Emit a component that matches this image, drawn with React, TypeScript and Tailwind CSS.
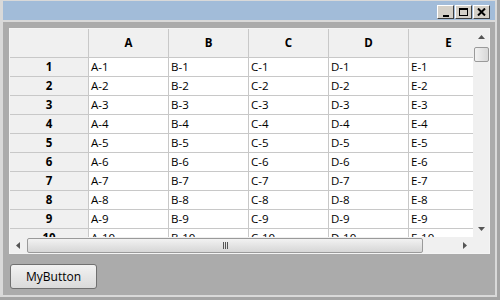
import React from 'react';

const columnas = ['A', 'B', 'C', 'D', 'E'];
const filas = Array.from({ length: 10 }, (_, i) => i + 1);

const fuente = { fontFamily: '"Open Sans", "Noto Sans", sans-serif' };

const BotonTitulo = ({ children }: { children: React.ReactNode }) => (
  <div className="w-[17px] h-[14px] bg-[#d4d0c8] border border-t-white border-l-white border-r-[#404040] border-b-[#404040] flex items-center justify-center">
    {children}
  </div>
);

const App: React.FC = () => {
  return (
    <div
      className="w-[500px] h-[300px] bg-[#d9d9d9] border-r-[3px] border-b-[3px] border-[#a4a4a4] pl-[3px] pr-[2px] pt-[1px] pb-[2px] flex flex-col gap-[2px] overflow-hidden"
      style={fuente}
    >
      {/* barra de titulo */}
      <div className="h-[19px] shrink-0 bg-[#a2bcd9] flex items-end justify-end pr-[5px] pb-[1px] gap-[1px]">
        <BotonTitulo>
          <div className="w-[6px] h-[2px] bg-black mt-[7px]" />
        </BotonTitulo>
        <BotonTitulo>
          <div className="w-[9px] h-[8px] border border-black border-t-2" />
        </BotonTitulo>
        <BotonTitulo>
          <svg width="9" height="8" viewBox="0 0 9 8">
            <path d="M1 0.5 L8 7.5 M8 0.5 L1 7.5" stroke="#000" strokeWidth="2" />
          </svg>
        </BotonTitulo>
      </div>

      {/* cuerpo */}
      <div className="flex-1 bg-[#ababab] pl-[6px] pt-[6px] flex flex-col">
        <div className="w-[481px] h-[226px] border border-[#f4f4f4] bg-white flex flex-col">
          <div className="flex h-[208px]">
            <div className="w-[463px] h-[208px] overflow-hidden text-[11.5px] text-black">
              {/* encabezado */}
              <div className="flex h-[29px]">
                <div className="w-[79px] shrink-0 bg-[#f0f0f0] border-r border-b border-[#c8c8c8]" />
                {columnas.map((c) => (
                  <div
                    key={c}
                    className="w-[80px] shrink-0 bg-[#f0f0f0] border-r border-b border-[#c8c8c8] flex items-center justify-center font-bold"
                  >
                    {c}
                  </div>
                ))}
              </div>
              {filas.map((f) => (
                <div key={f} className="flex h-[19px]">
                  <div className="w-[79px] shrink-0 bg-[#f0f0f0] border-r border-b border-[#c8c8c8] flex items-center justify-center font-bold">
                    {f}
                  </div>
                  {columnas.map((c) => (
                    <div
                      key={c}
                      className="w-[80px] shrink-0 border-r border-b border-[#c8c8c8] flex items-center pl-[2px] leading-none"
                    >
                      {c}-{f}
                    </div>
                  ))}
                </div>
              ))}
            </div>
            {/* scroll vertical */}
            <div className="w-[16px] h-[208px] bg-[#f0f0f0] flex flex-col items-center">
              <div className="h-[16px] w-full flex items-center justify-center">
                <svg width="7" height="4" viewBox="0 0 7 4">
                  <path d="M3.5 0 L7 4 L0 4 Z" fill="#555" />
                </svg>
              </div>
              <div className="mt-[2px] w-[15px] h-[15px] rounded-[2px] border border-[#9a9a9a] bg-gradient-to-r from-[#f2f2f2] to-[#d8d8d8]" />
              <div className="flex-1" />
              <div className="h-[16px] w-full flex items-center justify-center">
                <svg width="7" height="4" viewBox="0 0 7 4">
                  <path d="M0 0 L7 0 L3.5 4 Z" fill="#555" />
                </svg>
              </div>
            </div>
          </div>
          {/* scroll horizontal */}
          <div className="flex h-[16px]">
            <div className="w-[463px] h-[16px] bg-[#f0f0f0] flex items-center">
              <div className="w-[16px] h-full flex items-center justify-center">
                <svg width="4" height="7" viewBox="0 0 4 7">
                  <path d="M0 3.5 L4 0 L4 7 Z" fill="#555" />
                </svg>
              </div>
              <div className="ml-[1px] w-[396px] h-[15px] rounded-[2px] border border-[#9a9a9a] bg-gradient-to-b from-[#f2f2f2] to-[#d6d6d6] flex items-center justify-center gap-[1px]">
                <div className="w-[1px] h-[7px] bg-[#555]" />
                <div className="w-[1px] h-[7px] bg-[#555]" />
                <div className="w-[1px] h-[7px] bg-[#555]" />
              </div>
              <div className="flex-1" />
              <div className="w-[16px] h-full flex items-center justify-center">
                <svg width="4" height="7" viewBox="0 0 4 7">
                  <path d="M0 0 L4 3.5 L0 7 Z" fill="#555" />
                </svg>
              </div>
            </div>
            <div className="w-[16px] h-[16px] bg-[#f0f0f0]" />
          </div>
        </div>

        <button className="mt-[10px] ml-[1px] w-[87px] h-[25px] rounded-[3px] border border-[#707070] bg-gradient-to-b from-[#f2f2f2] to-[#dadada] text-[12px] text-black flex items-center justify-center">
          MyButton
        </button>
      </div>
    </div>
  );
};

export default App;
